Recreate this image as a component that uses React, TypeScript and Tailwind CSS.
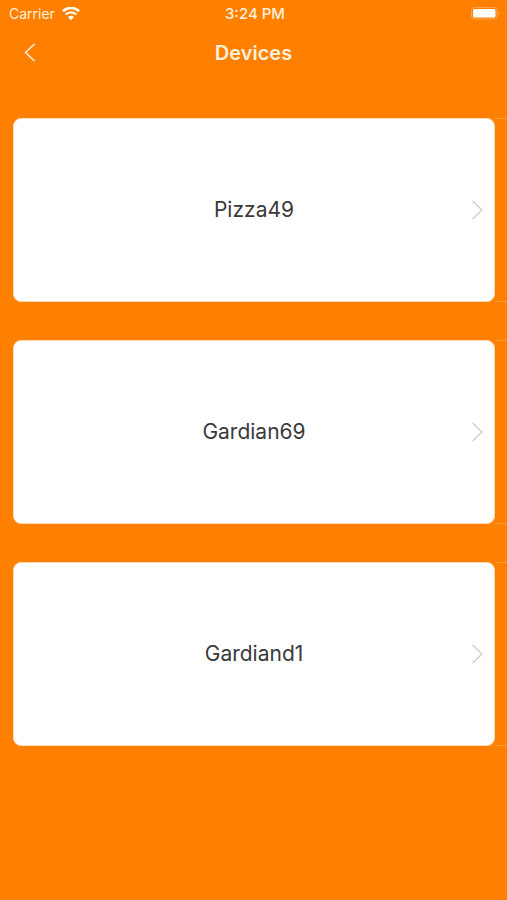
import React from 'react';

interface Device {
  id: number;
  name: string;
}

const devices: Device[] = [
  { id: 1, name: 'Pizza49' },
  { id: 2, name: 'Gardian69' },
  { id: 3, name: 'Gardiand1' },
];

const WifiIcon: React.FC = () => (
  <svg viewBox="0 0 18 14" className="w-[18px] h-[14px]" fill="none" stroke="#fff8ee" aria-hidden="true">
    <path d="M0.9 4.2C5.4 -0.2 12.6 -0.2 17.1 4.2" strokeWidth="2.6" />
    <path d="M3.7 7.5C6.7 4.6 11.3 4.6 14.3 7.5" strokeWidth="2.4" />
    <path d="M9 13.2L5.9 10.1C7.6 8.4 10.4 8.4 12.1 10.1Z" fill="#fff8ee" stroke="none" />
  </svg>
);

const BatteryIcon: React.FC = () => (
  <svg viewBox="0 0 31 14" className="w-[31px] h-[14px]" aria-hidden="true">
    <rect x="1.5" y="0.5" width="25.5" height="11.5" rx="3" fill="none" stroke="#ffa64d" />
    <rect x="3" y="2" width="22.5" height="8.5" rx="1.5" fill="#fff" />
    <path d="M28.5 4.3C30 4.7 30 7.7 28.5 8.2Z" fill="#ffa64d" />
  </svg>
);

const StatusBar: React.FC = () => (
  <div className="grid grid-cols-3 items-center h-7 pl-[9px] pr-[6px] text-sm text-[#fff0dc]">
    <div className="flex items-center gap-[7px]">
      <span>Carrier</span>
      <WifiIcon />
    </div>
    <span className="text-center text-[15px] font-medium">3:24 PM</span>
    <div className="flex justify-end">
      <BatteryIcon />
    </div>
  </div>
);

const Header: React.FC = () => (
  <header className="grid grid-cols-[60px_1fr_60px] items-center h-[50px] text-[#fff0dc]">
    <button type="button" aria-label="Back" className="flex justify-center">
      <svg viewBox="0 0 12 20" className="w-3 h-5" fill="none" stroke="currentColor" strokeWidth="1.5">
        <path d="M10.5 1L1.5 9.5L10.5 18" />
      </svg>
    </button>
    <h1 className="text-center text-xl font-semibold">Devices</h1>
  </header>
);

const DeviceRow: React.FC<{ device: Device }> = ({ device }) => (
  <li className="flex h-[184px]">
    <button
      type="button"
      className="grid flex-1 grid-cols-[24px_1fr_24px] items-center rounded-lg border border-[#ffd9b0] bg-white px-[11px] text-[#3a3a3a]"
    >
      <span className="col-start-2 text-center text-[21px] leading-8">{device.name}</span>
      <svg viewBox="0 0 12 20" className="w-3 h-5 justify-self-end" fill="none" stroke="#cfcfcf" strokeWidth="1.5" aria-hidden="true">
        <path d="M1.5 1L11 10L1.5 19" />
      </svg>
    </button>
    {/* separators run on to the screen edge */}
    <span className="w-3 border-y border-[#ff9a38]" />
  </li>
);

export default function App() {
  return (
    <div className="min-h-screen bg-[#ff8000] font-['Inter',sans-serif]">
      <StatusBar />
      <Header />
      <main className="pt-10 pl-[13px]">
        <ul className="flex flex-col gap-[38px]">
          {devices.map((device) => (
            <DeviceRow key={device.id} device={device} />
          ))}
        </ul>
      </main>
    </div>
  );
}
